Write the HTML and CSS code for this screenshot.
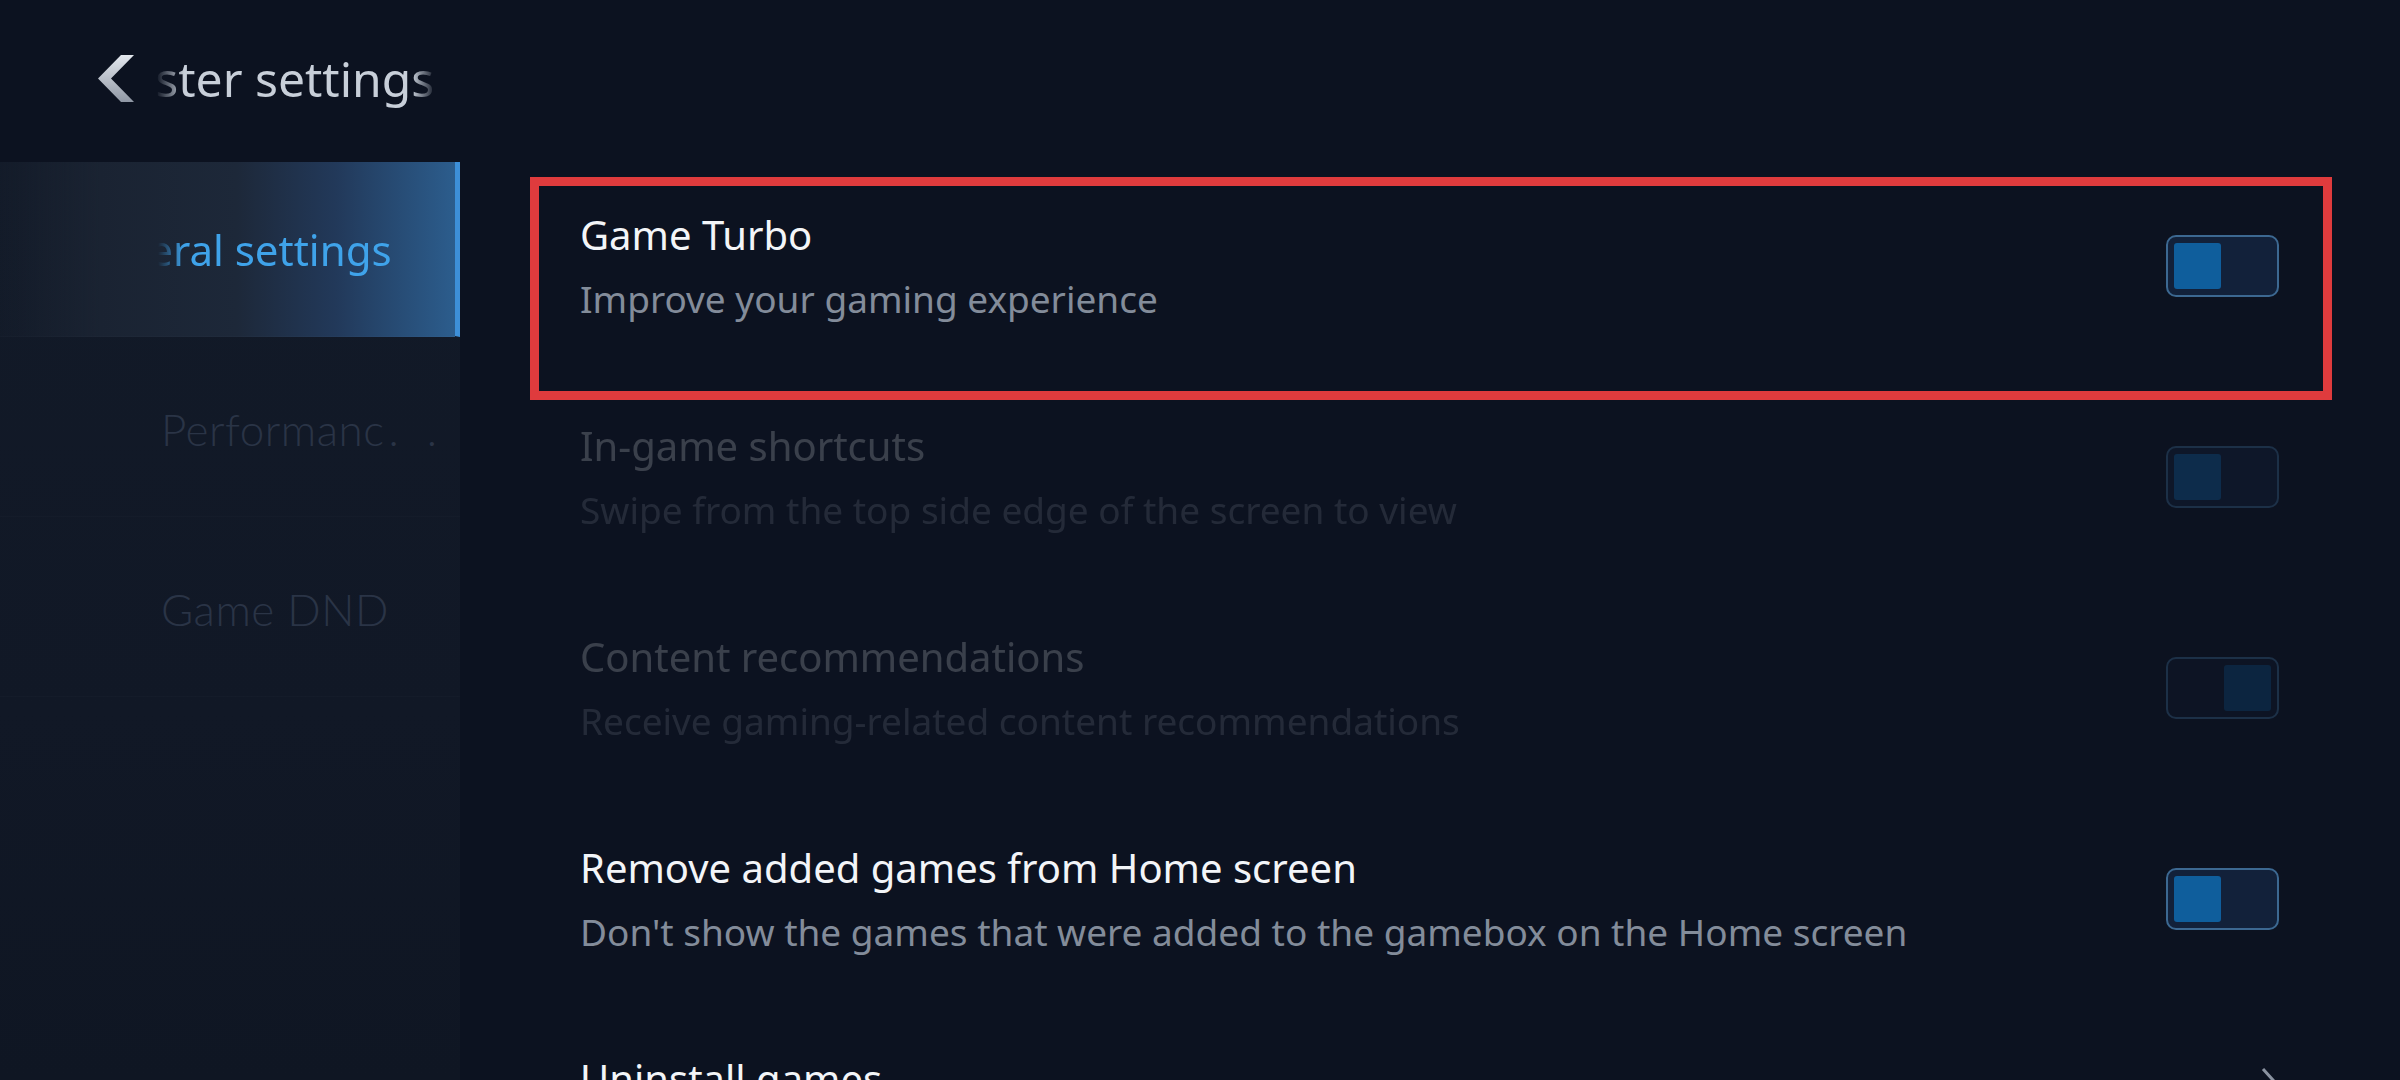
FILE: index.html
```html
<!DOCTYPE html>
<html lang="en">
<head>
    <meta charset="UTF-8">
    <title>Booster settings</title>
    <link rel="stylesheet" href="styles.css">
</head>
<body>
    <div class="page">
        <header class="topbar">
            <svg class="back" width="36" height="47" viewBox="0 0 36 47">
                <defs>
                    <linearGradient id="backfill" x1="0" y1="0" x2="0" y2="1">
                        <stop offset="0" stop-color="#e4e8ee"/>
                        <stop offset="1" stop-color="#8f97a4"/>
                    </linearGradient>
                </defs>
                <polygon points="0,23.5 23,0 36,0 13,23.5 36,47 23,47" fill="url(#backfill)"/>
            </svg>
            <div class="title"><span>Booster settings</span></div>
        </header>

        <div class="main">
            <aside class="sidebar">
                <div class="nav-item active">
                    <div class="nav-label"><span>General settings</span></div>
                </div>
                <div class="nav-item">
                    <div class="nav-label">Performanc<span class="dots">. .</span></div>
                </div>
                <div class="nav-item">
                    <div class="nav-label">Game DND</div>
                </div>
            </aside>

            <section class="list">
                <div class="row">
                    <div class="row-text">
                        <div class="row-title">Game Turbo</div>
                        <div class="row-sub">Improve your gaming experience</div>
                    </div>
                    <div class="toggle on"><span class="knob"></span></div>
                    <div class="highlight"></div>
                </div>

                <div class="row disabled">
                    <div class="row-text">
                        <div class="row-title">In-game shortcuts</div>
                        <div class="row-sub">Swipe from the top side edge of the screen to view</div>
                    </div>
                    <div class="toggle on"><span class="knob"></span></div>
                </div>

                <div class="row disabled">
                    <div class="row-text">
                        <div class="row-title">Content recommendations</div>
                        <div class="row-sub">Receive gaming-related content recommendations</div>
                    </div>
                    <div class="toggle off"><span class="knob"></span></div>
                </div>

                <div class="row">
                    <div class="row-text">
                        <div class="row-title">Remove added games from Home screen</div>
                        <div class="row-sub">Don't show the games that were added to the gamebox on the Home screen</div>
                    </div>
                    <div class="toggle on"><span class="knob"></span></div>
                </div>

                <div class="row">
                    <div class="row-text">
                        <div class="row-title">Uninstall games</div>
                        <div class="row-sub">Remove games from this device</div>
                    </div>
                    <svg class="more" width="24" height="46" viewBox="0 0 24 46">
                        <polyline points="2,2 21,23 2,44" fill="none" stroke="#8a92a0" stroke-width="3"/>
                    </svg>
                </div>
            </section>
        </div>
    </div>
</body>
</html>
```

FILE: styles.css
```css
* {
    margin: 0;
    padding: 0;
}

body {
    background-color: #0c1220;
    font-family: "Noto Sans", "Open Sans", sans-serif;
    overflow: hidden;
}

.page {
    width: 2400px;
    height: 1080px;
    overflow: hidden;
    display: flex;
    flex-direction: column;
}

/* header */
.topbar {
    height: 160px;
    flex-shrink: 0;
    box-sizing: border-box;
    padding: 47px 0 0 98px;
    display: flex;
    align-items: flex-start;
    gap: 16px;
}

.back {
    margin-top: 8px;
    flex-shrink: 0;
}

.title {
    width: 286px;
    overflow: hidden;
    white-space: nowrap;
    font-size: 48px;
    line-height: 64px;
    color: #c8cfd9;
    -webkit-mask-image: linear-gradient(90deg, transparent 0, transparent 6px, #000 34px, #000 262px, transparent 286px);
    mask-image: linear-gradient(90deg, transparent 0, transparent 6px, #000 34px, #000 262px, transparent 286px);
}

.title span {
    display: inline-block;
    margin-left: -84px;
}

/* body */
.main {
    flex: 1;
    min-height: 0;
    display: flex;
}

.sidebar {
    width: 460px;
    flex-shrink: 0;
    margin-top: 2px;
    background: linear-gradient(180deg, #121a28 0%, #111826 60%, #0f1623 100%);
}

.nav-item {
    height: 175px;
    margin-bottom: 5px;
    display: flex;
    align-items: center;
    padding-left: 161px;
    box-sizing: border-box;
    border-bottom: 1px solid rgba(255, 255, 255, 0.015);
}

.nav-label {
    font-family: "Lato", "Noto Sans", sans-serif;
    font-size: 44px;
    font-weight: 300;
    letter-spacing: 0.5px;
    color: #2a3446;
    white-space: nowrap;
}

.nav-label .dots {
    margin-left: 4px;
    letter-spacing: 8px;
}

.nav-item.active {
    padding-left: 148px;
    border-right: 5px solid #3d8fd8;
    background: linear-gradient(90deg, rgba(24, 32, 46, 0.2) 0%, #1a2332 22%, #1d2839 52%, #22395a 74%, #2c5d8d 100%);
}

.nav-item.active .nav-label {
    width: 270px;
    overflow: hidden;
    font-family: "Noto Sans", sans-serif;
    font-size: 42px;
    font-weight: 400;
    letter-spacing: 0;
    color: #3fa3ea;
    -webkit-mask-image: linear-gradient(90deg, transparent 0, transparent 10px, #000 36px);
    mask-image: linear-gradient(90deg, transparent 0, transparent 10px, #000 36px);
}

.nav-item.active .nav-label span {
    display: inline-block;
    margin-left: -79px;
}

/* settings list */
.list {
    flex: 1;
    padding: 0 121px 0 120px;
}

.row {
    position: relative;
    height: 211px;
    display: flex;
    align-items: center;
    justify-content: space-between;
}

.row-title {
    font-size: 40px;
    line-height: 52px;
    color: #f3f5f8;
}

.row-sub {
    margin-top: 14px;
    font-size: 37px;
    line-height: 48px;
    color: #838c9a;
}

.row.disabled .row-text {
    opacity: 0.2;
}

.row.disabled .toggle {
    opacity: 0.35;
}

.toggle {
    width: 113px;
    height: 62px;
    box-sizing: border-box;
    padding: 6px;
    border: 2px solid #3c6891;
    border-radius: 10px;
    background-color: #12213a;
    display: flex;
    justify-content: flex-start;
}

.toggle.off {
    justify-content: flex-end;
    background-color: #0f1a2c;
}

.knob {
    width: 47px;
    height: 46px;
    border-radius: 3px;
    background-color: #0f5e9c;
}

.toggle.off .knob {
    background-color: #0d4a7c;
}

.more {
    align-self: flex-start;
    margin-top: 63px;
    margin-right: -6px;
}

.highlight {
    position: absolute;
    top: 17px;
    left: -50px;
    right: -53px;
    height: 223px;
    box-sizing: border-box;
    border: 9px solid #df3b3d;
    pointer-events: none;
}
```
